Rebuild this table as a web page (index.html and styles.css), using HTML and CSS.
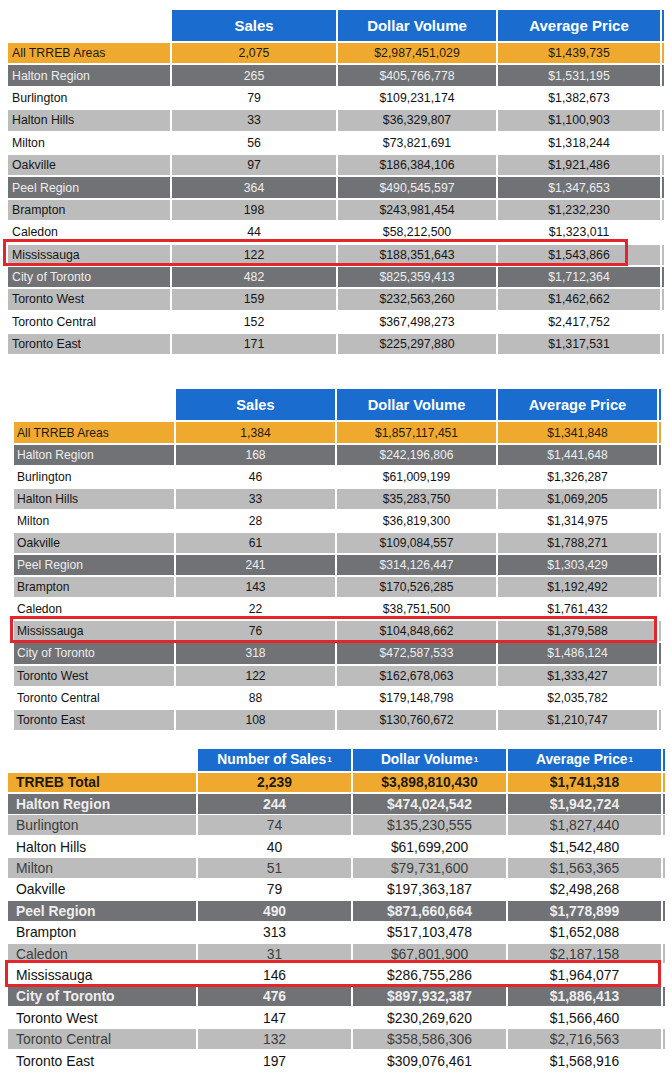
FILE: index.html
```html
<!DOCTYPE html>
<html lang="en">
<head>
<meta charset="utf-8">
<title>TRREB Sales</title>
<link rel="stylesheet" href="styles.css">
</head>
<body>
<section class="tbl t1">
  <div class="grid">
    <div class="row head"><div class="blank"></div><div>Sales</div><div>Dollar Volume</div><div>Average Price</div><div class="edge"></div></div>
    <div class="row or"><div class="lbl">All TRREB Areas</div><div>2,075</div><div>$2,987,451,029</div><div>$1,439,735</div><div class="edge"></div></div>
    <div class="row dk"><div class="lbl">Halton Region</div><div>265</div><div>$405,766,778</div><div>$1,531,195</div><div class="edge"></div></div>
    <div class="row wh"><div class="lbl">Burlington</div><div>79</div><div>$109,231,174</div><div>$1,382,673</div><div class="edge"></div></div>
    <div class="row lt"><div class="lbl">Halton Hills</div><div>33</div><div>$36,329,807</div><div>$1,100,903</div><div class="edge"></div></div>
    <div class="row wh"><div class="lbl">Milton</div><div>56</div><div>$73,821,691</div><div>$1,318,244</div><div class="edge"></div></div>
    <div class="row lt"><div class="lbl">Oakville</div><div>97</div><div>$186,384,106</div><div>$1,921,486</div><div class="edge"></div></div>
    <div class="row dk"><div class="lbl">Peel Region</div><div>364</div><div>$490,545,597</div><div>$1,347,653</div><div class="edge"></div></div>
    <div class="row lt"><div class="lbl">Brampton</div><div>198</div><div>$243,981,454</div><div>$1,232,230</div><div class="edge"></div></div>
    <div class="row wh"><div class="lbl">Caledon</div><div>44</div><div>$58,212,500</div><div>$1,323,011</div><div class="edge"></div></div>
    <div class="row lt"><div class="lbl">Mississauga</div><div>122</div><div>$188,351,643</div><div>$1,543,866</div><div class="edge"></div></div>
    <div class="row dk"><div class="lbl">City of Toronto</div><div>482</div><div>$825,359,413</div><div>$1,712,364</div><div class="edge"></div></div>
    <div class="row lt"><div class="lbl">Toronto West</div><div>159</div><div>$232,563,260</div><div>$1,462,662</div><div class="edge"></div></div>
    <div class="row wh"><div class="lbl">Toronto Central</div><div>152</div><div>$367,498,273</div><div>$2,417,752</div><div class="edge"></div></div>
    <div class="row lt"><div class="lbl">Toronto East</div><div>171</div><div>$225,297,880</div><div>$1,317,531</div><div class="edge"></div></div>
  </div>
  <div class="mark"></div>
</section>

<section class="tbl t2">
  <div class="grid">
    <div class="row head"><div class="blank"></div><div>Sales</div><div>Dollar Volume</div><div>Average Price</div><div class="edge"></div></div>
    <div class="row or"><div class="lbl">All TRREB Areas</div><div>1,384</div><div>$1,857,117,451</div><div>$1,341,848</div><div class="edge"></div></div>
    <div class="row dk"><div class="lbl">Halton Region</div><div>168</div><div>$242,196,806</div><div>$1,441,648</div><div class="edge"></div></div>
    <div class="row wh"><div class="lbl">Burlington</div><div>46</div><div>$61,009,199</div><div>$1,326,287</div><div class="edge"></div></div>
    <div class="row lt"><div class="lbl">Halton Hills</div><div>33</div><div>$35,283,750</div><div>$1,069,205</div><div class="edge"></div></div>
    <div class="row wh"><div class="lbl">Milton</div><div>28</div><div>$36,819,300</div><div>$1,314,975</div><div class="edge"></div></div>
    <div class="row lt"><div class="lbl">Oakville</div><div>61</div><div>$109,084,557</div><div>$1,788,271</div><div class="edge"></div></div>
    <div class="row dk"><div class="lbl">Peel Region</div><div>241</div><div>$314,126,447</div><div>$1,303,429</div><div class="edge"></div></div>
    <div class="row lt"><div class="lbl">Brampton</div><div>143</div><div>$170,526,285</div><div>$1,192,492</div><div class="edge"></div></div>
    <div class="row wh"><div class="lbl">Caledon</div><div>22</div><div>$38,751,500</div><div>$1,761,432</div><div class="edge"></div></div>
    <div class="row lt"><div class="lbl">Mississauga</div><div>76</div><div>$104,848,662</div><div>$1,379,588</div><div class="edge"></div></div>
    <div class="row dk"><div class="lbl">City of Toronto</div><div>318</div><div>$472,587,533</div><div>$1,486,124</div><div class="edge"></div></div>
    <div class="row lt"><div class="lbl">Toronto West</div><div>122</div><div>$162,678,063</div><div>$1,333,427</div><div class="edge"></div></div>
    <div class="row wh"><div class="lbl">Toronto Central</div><div>88</div><div>$179,148,798</div><div>$2,035,782</div><div class="edge"></div></div>
    <div class="row lt"><div class="lbl">Toronto East</div><div>108</div><div>$130,760,672</div><div>$1,210,747</div><div class="edge"></div></div>
  </div>
  <div class="mark"></div>
</section>

<section class="tbl t3">
  <div class="grid">
    <div class="row head"><div class="blank"></div><div>Number of Sales<sup>1</sup></div><div>Dollar Volume<sup>1</sup></div><div>Average Price<sup>1</sup></div><div class="edge"></div></div>
    <div class="row or b"><div class="lbl">TRREB Total</div><div>2,239</div><div>$3,898,810,430</div><div>$1,741,318</div><div class="edge"></div></div>
    <div class="row dk b"><div class="lbl">Halton Region</div><div>244</div><div>$474,024,542</div><div>$1,942,724</div><div class="edge"></div></div>
    <div class="row lt"><div class="lbl">Burlington</div><div>74</div><div>$135,230,555</div><div>$1,827,440</div><div class="edge"></div></div>
    <div class="row wh"><div class="lbl">Halton Hills</div><div>40</div><div>$61,699,200</div><div>$1,542,480</div><div class="edge"></div></div>
    <div class="row lt"><div class="lbl">Milton</div><div>51</div><div>$79,731,600</div><div>$1,563,365</div><div class="edge"></div></div>
    <div class="row wh"><div class="lbl">Oakville</div><div>79</div><div>$197,363,187</div><div>$2,498,268</div><div class="edge"></div></div>
    <div class="row dk b"><div class="lbl">Peel Region</div><div>490</div><div>$871,660,664</div><div>$1,778,899</div><div class="edge"></div></div>
    <div class="row wh"><div class="lbl">Brampton</div><div>313</div><div>$517,103,478</div><div>$1,652,088</div><div class="edge"></div></div>
    <div class="row lt"><div class="lbl">Caledon</div><div>31</div><div>$67,801,900</div><div>$2,187,158</div><div class="edge"></div></div>
    <div class="row wh"><div class="lbl">Mississauga</div><div>146</div><div>$286,755,286</div><div>$1,964,077</div><div class="edge"></div></div>
    <div class="row dk b"><div class="lbl">City of Toronto</div><div>476</div><div>$897,932,387</div><div>$1,886,413</div><div class="edge"></div></div>
    <div class="row wh"><div class="lbl">Toronto West</div><div>147</div><div>$230,269,620</div><div>$1,566,460</div><div class="edge"></div></div>
    <div class="row lt"><div class="lbl">Toronto Central</div><div>132</div><div>$358,586,306</div><div>$2,716,563</div><div class="edge"></div></div>
    <div class="row wh"><div class="lbl">Toronto East</div><div>197</div><div>$309,076,461</div><div>$1,568,916</div><div class="edge"></div></div>
  </div>
  <div class="mark"></div>
</section>
</body>
</html>
```

FILE: styles.css
```css
html, body {
  margin: 0;
  padding: 0;
  background: #ffffff;
}
body {
  width: 672px;
  height: 1083px;
  overflow: hidden;
  font-family: "Liberation Sans", Arial, sans-serif;
  color: #111;
}
.tbl {
  position: relative;
}
.grid {
  display: grid;
  column-gap: 2px;
  row-gap: 2px;
}
.row {
  display: contents;
}
.row > div {
  display: flex;
  align-items: center;
  justify-content: center;
  white-space: nowrap;
  overflow: hidden;
}
.row > div.lbl {
  justify-content: flex-start;
}
.head > div {
  background: #1a6dcf;
  color: #ffffff;
  font-weight: bold;
}
.head > div.blank {
  background: transparent;
}
.or > div {
  background: #f0a92f;
  color: #1e1a12;
}
.dk > div {
  background: #717275;
  color: #eeeeee;
}
.lt > div {
  background: #bcbcbc;
  color: #151515;
}
.wh > div {
  background: #ffffff;
  color: #111111;
}
.b > div {
  font-weight: bold;
}

/* table 1 */
.t1 {
  margin: 10px 0 0 8px;
}
.t1 .grid {
  grid-template-columns: 162px 164px 158px 162px 2px;
  grid-template-rows: 31px repeat(14, 20.4px);
  font-size: 12.3px;
}
.t1 .head > div {
  font-size: 15px;
}
.t1 .lbl {
  padding-left: 4px;
}
.t1 .mark {
  left: -5px;
  top: 229px;
  width: 619px;
  height: 21px;
}

/* table 2 */
.t2 {
  margin: 35px 0 0 14px;
}
.t2 .grid {
  grid-template-columns: 160px 159px 159px 159px 2px;
  grid-template-rows: 31px repeat(14, 20.1px);
  font-size: 12.1px;
}
.t2 .head > div {
  font-size: 14.7px;
}
.t2 .lbl {
  padding-left: 3px;
}
.t2 .mark {
  left: -4px;
  top: 227px;
  width: 641px;
  height: 21px;
}

/* table 3 */
.t3 {
  margin: 19px 0 0 8px;
}
.t3 .grid {
  grid-template-columns: 188px 153px 153px 153px 2px;
  grid-template-rows: 22px repeat(14, 19.5px);
  row-gap: 1.9px;
  font-size: 13.9px;
}
.t3 .head > div {
  font-size: 13.8px;
}
.t3 .lbl {
  padding-left: 8px;
}
.t3 .lt > div {
  color: #3c3c3c;
}
.t3 .mark {
  left: -3px;
  top: 211px;
  width: 650px;
  height: 21px;
}
sup {
  font-size: 8px;
  line-height: 0;
  vertical-align: 5px;
  margin-left: 1px;
}
.mark {
  position: absolute;
  border: 3px solid #e3262b;
}
```
